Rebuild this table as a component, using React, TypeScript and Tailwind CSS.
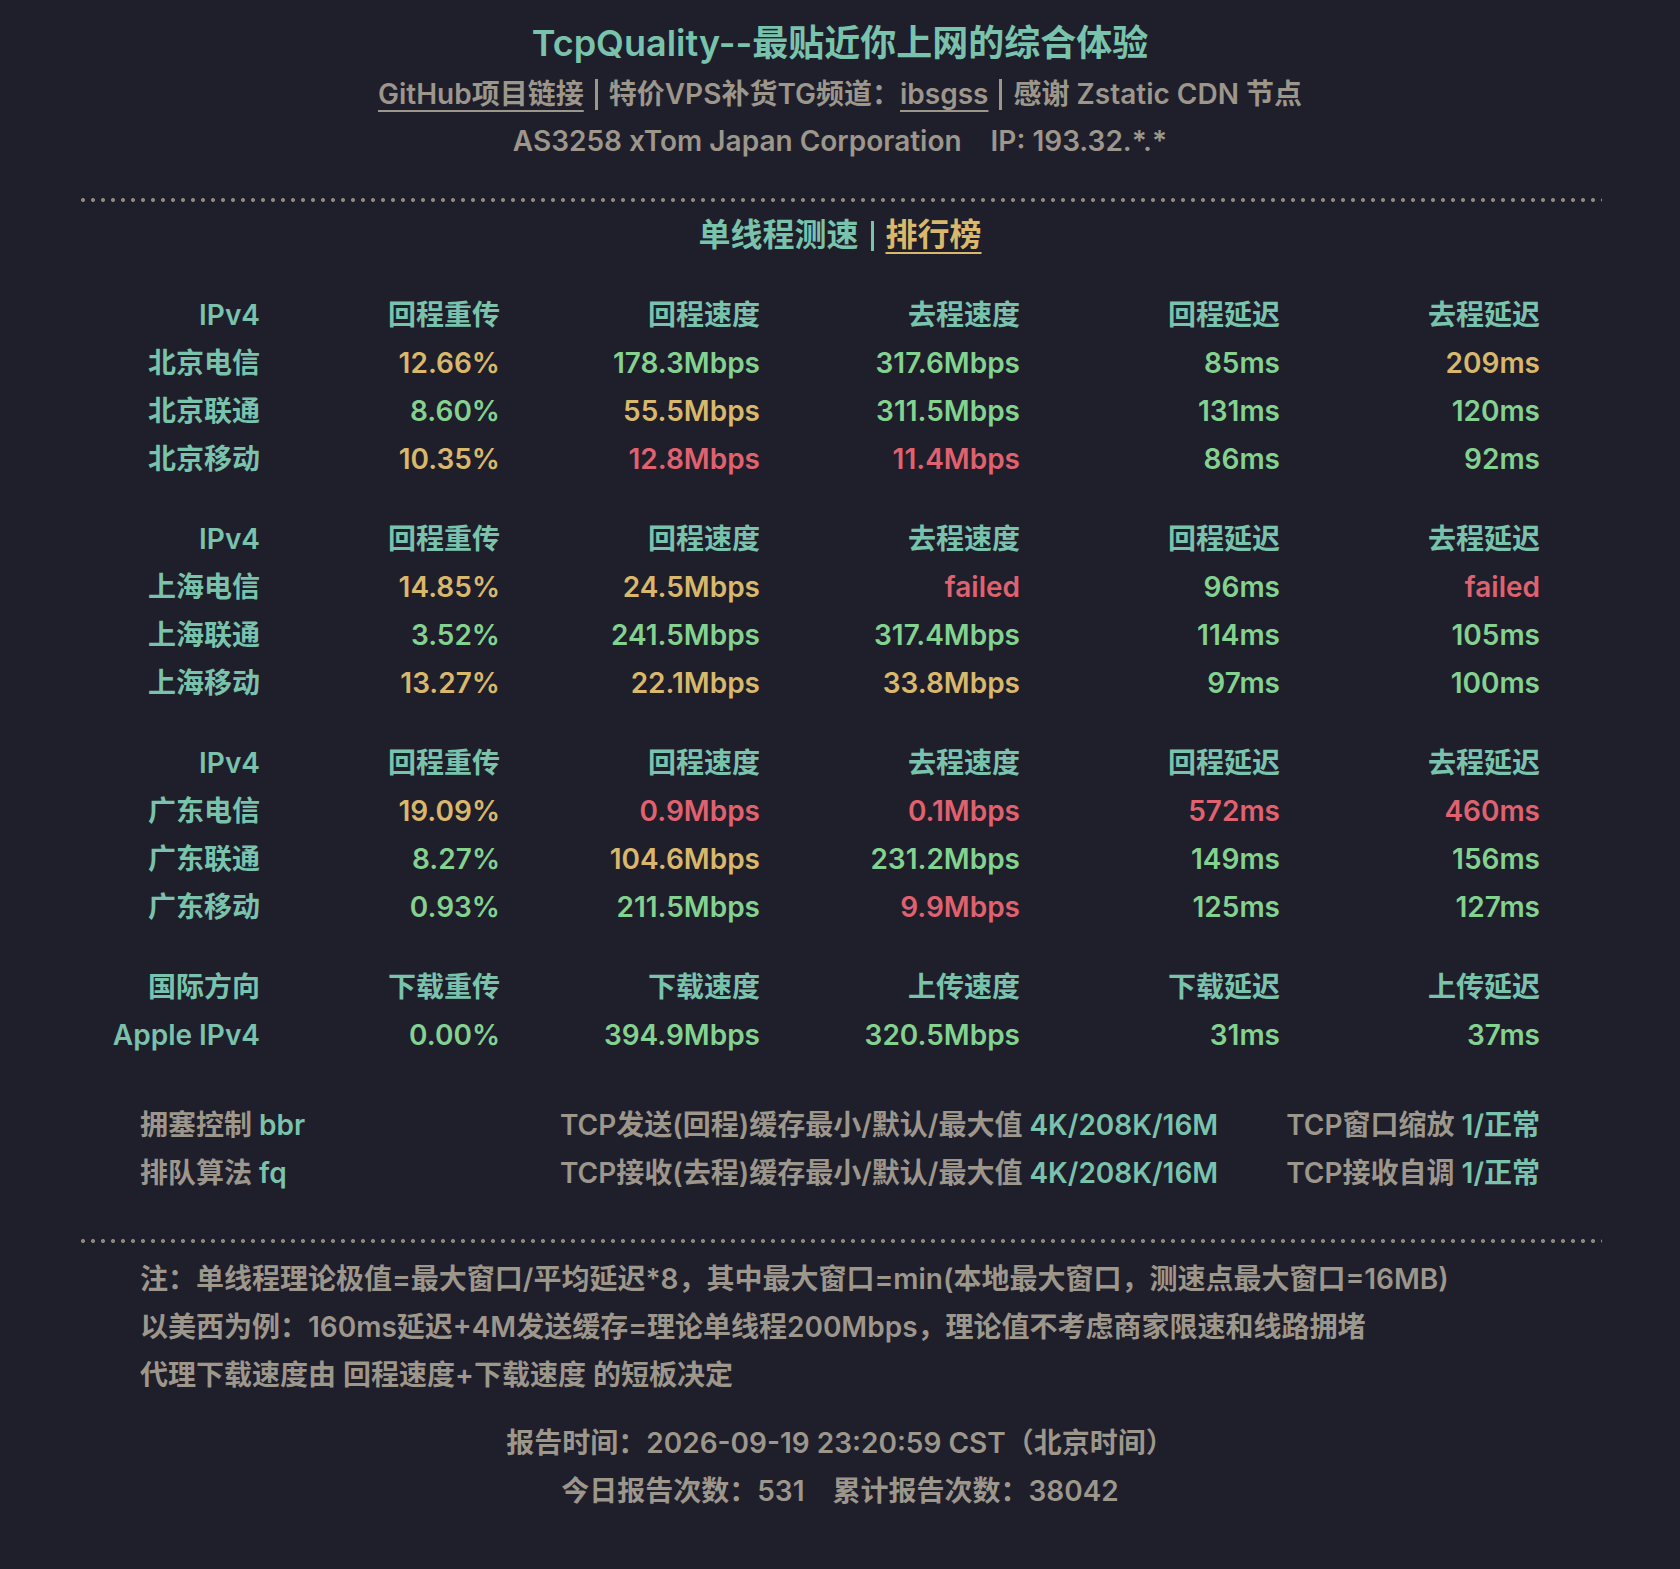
import React from "react";

type C = "y" | "g" | "r";
const colorCls: Record<C, string> = {
  y: "text-[#d9b86b]",
  g: "text-[#84d28f]",
  r: "text-[#e0626f]",
};

type Row = { label: string; cells: [string, C][] };
type Group = { head: string[]; rows: Row[] };

const groups: Group[] = [
  {
    head: ["IPv4", "回程重传", "回程速度", "去程速度", "回程延迟", "去程延迟"],
    rows: [
      { label: "北京电信", cells: [["12.66%", "y"], ["178.3Mbps", "g"], ["317.6Mbps", "g"], ["85ms", "g"], ["209ms", "y"]] },
      { label: "北京联通", cells: [["8.60%", "g"], ["55.5Mbps", "y"], ["311.5Mbps", "g"], ["131ms", "g"], ["120ms", "g"]] },
      { label: "北京移动", cells: [["10.35%", "y"], ["12.8Mbps", "r"], ["11.4Mbps", "r"], ["86ms", "g"], ["92ms", "g"]] },
    ],
  },
  {
    head: ["IPv4", "回程重传", "回程速度", "去程速度", "回程延迟", "去程延迟"],
    rows: [
      { label: "上海电信", cells: [["14.85%", "y"], ["24.5Mbps", "y"], ["failed", "r"], ["96ms", "g"], ["failed", "r"]] },
      { label: "上海联通", cells: [["3.52%", "g"], ["241.5Mbps", "g"], ["317.4Mbps", "g"], ["114ms", "g"], ["105ms", "g"]] },
      { label: "上海移动", cells: [["13.27%", "y"], ["22.1Mbps", "y"], ["33.8Mbps", "y"], ["97ms", "g"], ["100ms", "g"]] },
    ],
  },
  {
    head: ["IPv4", "回程重传", "回程速度", "去程速度", "回程延迟", "去程延迟"],
    rows: [
      { label: "广东电信", cells: [["19.09%", "y"], ["0.9Mbps", "r"], ["0.1Mbps", "r"], ["572ms", "r"], ["460ms", "r"]] },
      { label: "广东联通", cells: [["8.27%", "g"], ["104.6Mbps", "y"], ["231.2Mbps", "g"], ["149ms", "g"], ["156ms", "g"]] },
      { label: "广东移动", cells: [["0.93%", "g"], ["211.5Mbps", "g"], ["9.9Mbps", "r"], ["125ms", "g"], ["127ms", "g"]] },
    ],
  },
  {
    head: ["国际方向", "下载重传", "下载速度", "上传速度", "下载延迟", "上传延迟"],
    rows: [
      { label: "Apple IPv4", cells: [["0.00%", "g"], ["394.9Mbps", "g"], ["320.5Mbps", "g"], ["31ms", "g"], ["37ms", "g"]] },
    ],
  },
];

function Dotted() {
  return (
    <div className="mx-auto h-[4px] w-[1524px] bg-[radial-gradient(circle,#8d877b_1.7px,transparent_2.3px)] bg-[length:10px_4px] bg-repeat-x" />
  );
}

function Bar({ cls }: { cls: string }) {
  return <span className={"mx-[11px] inline-block h-[31px] w-[3px] align-[-6px] " + cls} />;
}

export default function App() {
  return (
    <div className="min-h-screen w-full bg-[#1f1e2b] font-[family-name:Inter,'Noto_Sans_CJK_SC',sans-serif] font-semibold text-[28px] text-[#9c968b]">
      <div className="pt-[19px] text-center">
        <div className="text-[36px] leading-[48px] text-[#79c3ad]">TcpQuality--最贴近你上网的综合体验</div>
        <div className="mt-[3px] leading-[48px]">
          <span className="underline decoration-2 underline-offset-[6px]">GitHub项目链接</span>
          <Bar cls="bg-[#9c968b]" />
          <span>特价VPS补货TG频道：</span>
          <span className="underline decoration-2 underline-offset-[6px]">ibsgss</span>
          <Bar cls="bg-[#9c968b]" />
          <span>感谢 Zstatic CDN 节点</span>
        </div>
        <div className="leading-[46px]">
          <span>AS3258 xTom Japan Corporation</span>
          <span className="ml-[29px]">IP: 193.32.*.*</span>
        </div>
      </div>

      <div className="mt-[34px]">
        <Dotted />
      </div>

      <div className="mt-[9px] text-center text-[32px] leading-[48px] text-[#79c3ad]">
        <span>单线程测速</span>
        <span className="mx-[12px] inline-block h-[30px] w-[3px] bg-[#79c3ad] align-[-5px]" />
        <span className="text-[#d9b86b] underline decoration-2 underline-offset-[6px]">排行榜</span>
      </div>

      <div className="mt-[32px] ml-[100px] flex flex-col gap-[32px]">
        {groups.map((g, gi) => (
          <div key={gi} className="grid grid-cols-[160px_240px_260px_260px_260px_260px] text-right leading-[48px]">
            {g.head.map((h, hi) => (
              <div key={hi} className="text-[#79c3ad] whitespace-nowrap">{h}</div>
            ))}
            {g.rows.map((r, ri) => (
              <React.Fragment key={ri}>
                <div className="text-[#79c3ad] whitespace-nowrap">{r.label}</div>
                {r.cells.map(([v, c], ci) => (
                  <div key={ci} className={colorCls[c] + " whitespace-nowrap"}>{v}</div>
                ))}
              </React.Fragment>
            ))}
          </div>
        ))}
      </div>

      <div className="mt-[42px] ml-[140px] grid w-[1400px] grid-cols-[420px_1fr_auto] leading-[48px] whitespace-nowrap">
        <div>拥塞控制 <span className="text-[#79c3ad]">bbr</span></div>
        <div>TCP发送(回程)缓存最小/默认/最大值 <span className="text-[#79c3ad]">4K/208K/16M</span></div>
        <div className="text-right">TCP窗口缩放 <span className="text-[#79c3ad]">1/正常</span></div>
        <div>排队算法 <span className="text-[#79c3ad]">fq</span></div>
        <div>TCP接收(去程)缓存最小/默认/最大值 <span className="text-[#79c3ad]">4K/208K/16M</span></div>
        <div className="text-right">TCP接收自调 <span className="text-[#79c3ad]">1/正常</span></div>
      </div>

      <div className="mt-[42px]">
        <Dotted />
      </div>

      <div className="mt-[12px] ml-[140px] leading-[48px] whitespace-nowrap">
        <div>注：单线程理论极值=最大窗口/平均延迟*8，其中最大窗口=min(本地最大窗口，测速点最大窗口=16MB)</div>
        <div>以美西为例：160ms延迟+4M发送缓存=理论单线程200Mbps，理论值不考虑商家限速和线路拥堵</div>
        <div>代理下载速度由 回程速度+下载速度 的短板决定</div>
      </div>

      <div className="mt-[20px] pb-[40px] text-center leading-[48px]">
        <div>报告时间：2026-09-19 23:20:59 CST（北京时间）</div>
        <div>
          <span>今日报告次数：531</span>
          <span className="ml-[28px]">累计报告次数：38042</span>
        </div>
      </div>
    </div>
  );
}
